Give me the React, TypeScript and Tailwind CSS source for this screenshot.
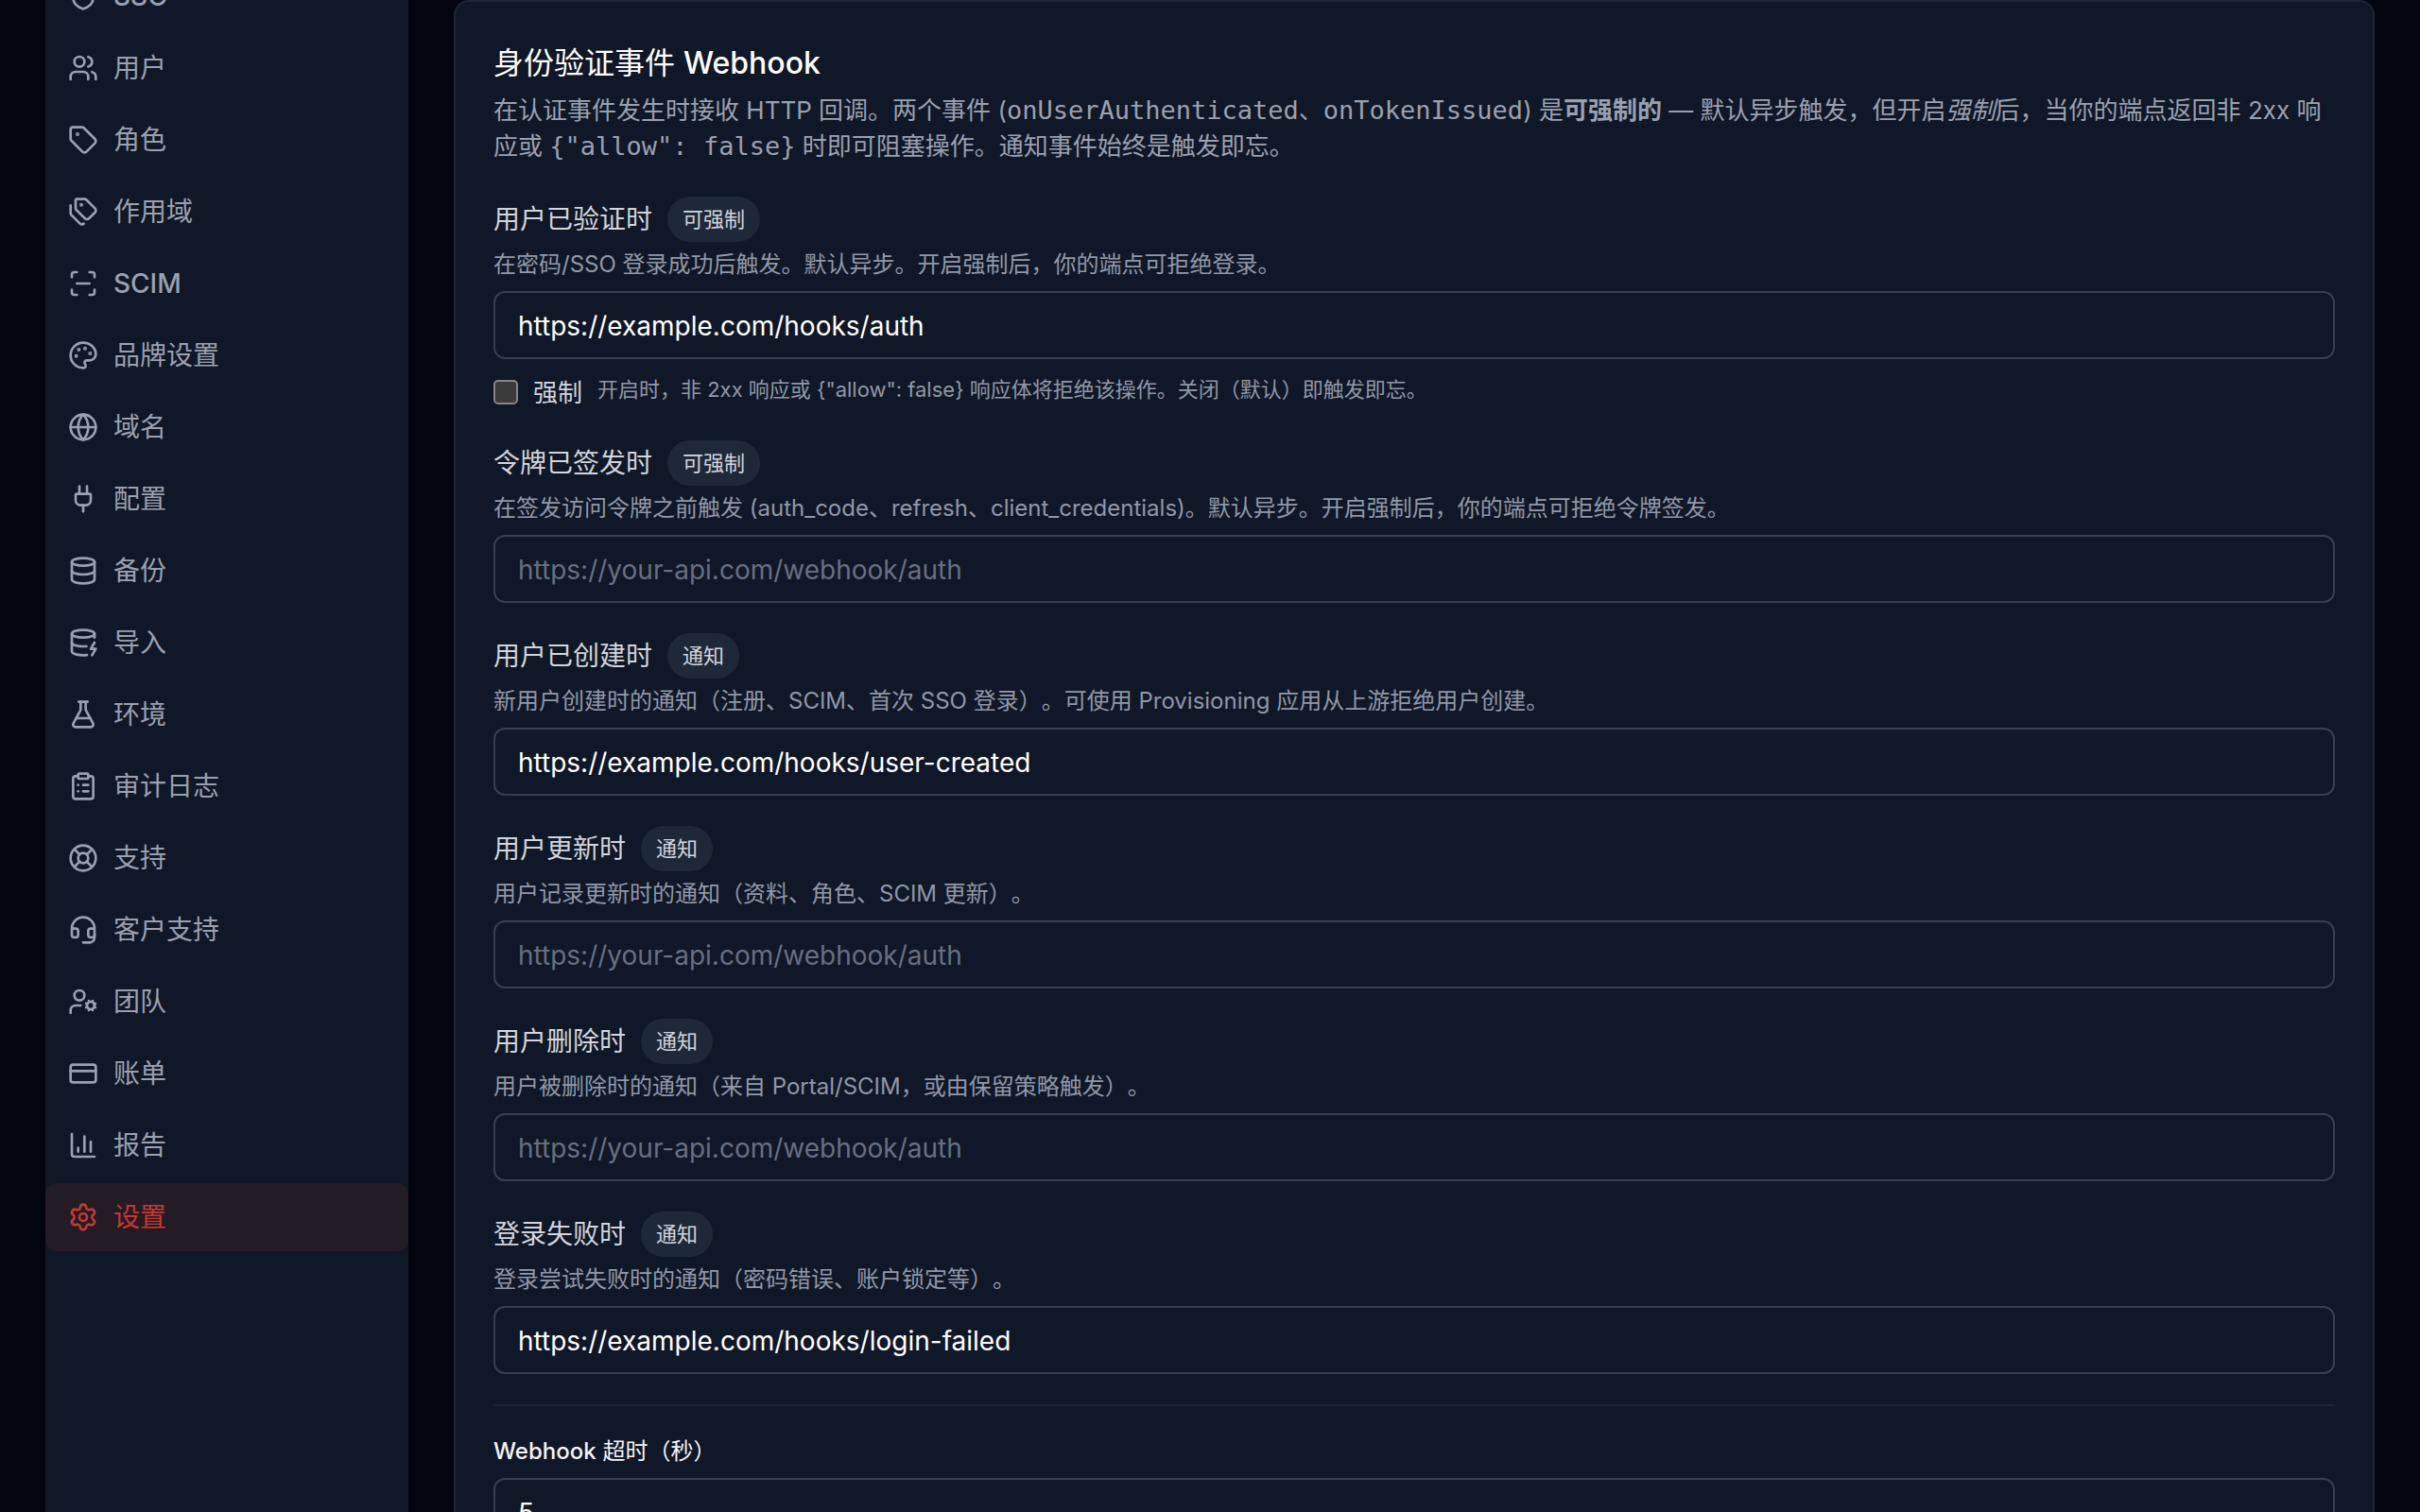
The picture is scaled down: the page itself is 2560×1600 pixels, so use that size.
import React, { useState } from 'react';
import {
  ChartColumn,
  ClipboardList,
  CreditCard,
  Database,
  DatabaseZap,
  FlaskConical,
  Globe,
  Headset,
  LifeBuoy,
  LucideIcon,
  Palette,
  Plug,
  ScanLine,
  Settings,
  Shield,
  Tag,
  Tags,
  UserCog,
  Users,
} from 'lucide-react';

interface NavItem {
  id: string;
  label: string;
  icon: LucideIcon;
  latin?: boolean;
}

interface HookField {
  id: string;
  label: string;
  badge: string;
  hint: string;
  url: string;
  enforceable?: boolean;
}

const navItems: NavItem[] = [
  { id: 'sso', label: 'SSO', icon: Shield, latin: true },
  { id: 'users', label: '用户', icon: Users },
  { id: 'roles', label: '角色', icon: Tag },
  { id: 'scopes', label: '作用域', icon: Tags },
  { id: 'scim', label: 'SCIM', icon: ScanLine, latin: true },
  { id: 'branding', label: '品牌设置', icon: Palette },
  { id: 'domains', label: '域名', icon: Globe },
  { id: 'provisioning', label: '配置', icon: Plug },
  { id: 'backups', label: '备份', icon: Database },
  { id: 'import', label: '导入', icon: DatabaseZap },
  { id: 'environments', label: '环境', icon: FlaskConical },
  { id: 'audit', label: '审计日志', icon: ClipboardList },
  { id: 'support', label: '支持', icon: LifeBuoy },
  { id: 'customer-support', label: '客户支持', icon: Headset },
  { id: 'team', label: '团队', icon: UserCog },
  { id: 'billing', label: '账单', icon: CreditCard },
  { id: 'reports', label: '报告', icon: ChartColumn },
  { id: 'settings', label: '设置', icon: Settings },
];

const hookFields: HookField[] = [
  {
    id: 'user-authenticated',
    label: '用户已验证时',
    badge: '可强制',
    hint: '在密码/SSO 登录成功后触发。默认异步。开启强制后，你的端点可拒绝登录。',
    url: 'https://example.com/hooks/auth',
    enforceable: true,
  },
  {
    id: 'token-issued',
    label: '令牌已签发时',
    badge: '可强制',
    hint: '在签发访问令牌之前触发 (auth_code、refresh、client_credentials)。默认异步。开启强制后，你的端点可拒绝令牌签发。',
    url: '',
    enforceable: true,
  },
  {
    id: 'user-created',
    label: '用户已创建时',
    badge: '通知',
    hint: '新用户创建时的通知（注册、SCIM、首次 SSO 登录）。可使用 Provisioning 应用从上游拒绝用户创建。',
    url: 'https://example.com/hooks/user-created',
  },
  {
    id: 'user-updated',
    label: '用户更新时',
    badge: '通知',
    hint: '用户记录更新时的通知（资料、角色、SCIM 更新）。',
    url: '',
  },
  {
    id: 'user-deleted',
    label: '用户删除时',
    badge: '通知',
    hint: '用户被删除时的通知（来自 Portal/SCIM，或由保留策略触发）。',
    url: '',
  },
  {
    id: 'login-failed',
    label: '登录失败时',
    badge: '通知',
    hint: '登录尝试失败时的通知（密码错误、账户锁定等）。',
    url: 'https://example.com/hooks/login-failed',
  },
];

const inputClass =
  'w-full h-18 rounded-xl border-2 border-[#36404e] bg-transparent px-6 pt-0.5 text-[28px] text-white placeholder:text-[#667080] outline-none focus:border-gray-500';

const Sidebar: React.FC<{ active: string }> = ({ active }) => (
  <aside className="w-96 shrink-0 bg-[#0f1826]">
    <nav className="flex flex-col gap-1">
      {navItems.map(({ id, label, icon: Icon, latin }) => (
        <a
          key={id}
          href={`#${id}`}
          aria-current={id === active ? 'page' : undefined}
          className={
            id === active
              ? 'flex items-center gap-4 h-18 px-6 rounded-xl text-[28px] bg-[#231b25] text-[#c4392f]'
              : 'flex items-center gap-4 h-18 px-6 rounded-xl text-[28px] text-gray-400'
          }
        >
          <Icon className="w-8 h-8 shrink-0" />
          <span className={latin ? 'font-medium' : 'font-normal'}>{label}</span>
        </a>
      ))}
    </nav>
  </aside>
);

const Code: React.FC<{ children: React.ReactNode }> = ({ children }) => (
  <code className="font-['DejaVu_Sans_Mono','Noto_Sans_CJK_SC',monospace] text-[27px]">{children}</code>
);

const WebhookField: React.FC<{ field: HookField }> = ({ field }) => {
  const [url, setUrl] = useState(field.url);
  const [enforced, setEnforced] = useState(false);

  return (
    <div>
      <div className="flex flex-col gap-2">
        <div className="flex items-center gap-4">
          <label htmlFor={field.id} className="text-[28px] text-gray-300">{field.label}</label>
          <span className="flex items-center h-12 px-4 rounded-full bg-[#1e2938] text-[22px] text-gray-300">
            {field.badge}
          </span>
        </div>
        <p className="pb-1 text-2xl leading-8 text-[#8f98a6]">{field.hint}</p>
        <input
          id={field.id}
          type="url"
          className={inputClass}
          placeholder="https://your-api.com/webhook/auth"
          value={url}
          onChange={(e) => setUrl(e.target.value)}
        />
      </div>

      {/* Enforcing only makes sense once an endpoint is set */}
      {field.enforceable && url && (
        <label className="flex items-center gap-4 mt-4 h-[38px]">
          <input
            type="checkbox"
            checked={enforced}
            onChange={(e) => setEnforced(e.target.checked)}
            className="appearance-none w-[26px] h-[26px] shrink-0 rounded-[5px] border-2 border-[#858585] bg-[#3b3b3b] checked:bg-red-600"
          />
          <span className="text-[26px] text-gray-300">强制</span>
          <span className="self-start text-[22px] leading-8 text-[#8f98a6]">
            {'开启时，非 2xx 响应或 {"allow": false} 响应体将拒绝该操作。关闭（默认）即触发即忘。'}
          </span>
        </label>
      )}
    </div>
  );
};

const App: React.FC = () => {
  const [timeoutSeconds, setTimeoutSeconds] = useState('5');

  return (
    <div className="h-screen overflow-hidden bg-[#010510] font-['Inter','Noto_Sans_CJK_SC',sans-serif] [text-spacing-trim:space-all]">
      <div className="flex gap-12 h-full px-12">
        {/* Menu is scrolled past its first entries */}
        <div className="flex -mt-10">
          <Sidebar active="settings" />
        </div>

        <main className="flex-1 min-w-0">
          <section className="flex flex-col gap-8 p-10 rounded-2xl border-2 border-[#1c2634] bg-[#0f1826]">
            <header className="flex flex-col gap-1.5 pb-0.5">
              <h2 className="text-[32px] leading-[50px] text-white">
                身份验证事件 <span className="font-medium">Webhook</span>
              </h2>
              <p className="text-[26px] leading-[38px] text-gray-400">
                在认证事件发生时接收 HTTP 回调。两个事件 (<Code>onUserAuthenticated</Code>、<Code>onTokenIssued</Code>) 是
                <strong className="font-bold">可强制的</strong> — 默认异步触发，但开启<em>强制</em>后，当你的端点返回非 2xx 响应或{' '}
                <Code>{'{"allow": false}'}</Code> 时即可阻塞操作。通知事件始终是触发即忘。
              </p>
            </header>

            {hookFields.map((field) => (
              <WebhookField key={field.id} field={field} />
            ))}

            <div className="flex flex-col gap-2 pt-8 border-t-2 border-[#1c2634]">
              <label htmlFor="webhook-timeout" className="pb-1 text-2xl leading-8 text-gray-100">
                <span className="font-medium">Webhook</span> 超时（秒）
              </label>
              <input
                id="webhook-timeout"
                type="number"
                className={inputClass}
                value={timeoutSeconds}
                onChange={(e) => setTimeoutSeconds(e.target.value)}
              />
            </div>
          </section>
        </main>
      </div>
    </div>
  );
};

export default App;
